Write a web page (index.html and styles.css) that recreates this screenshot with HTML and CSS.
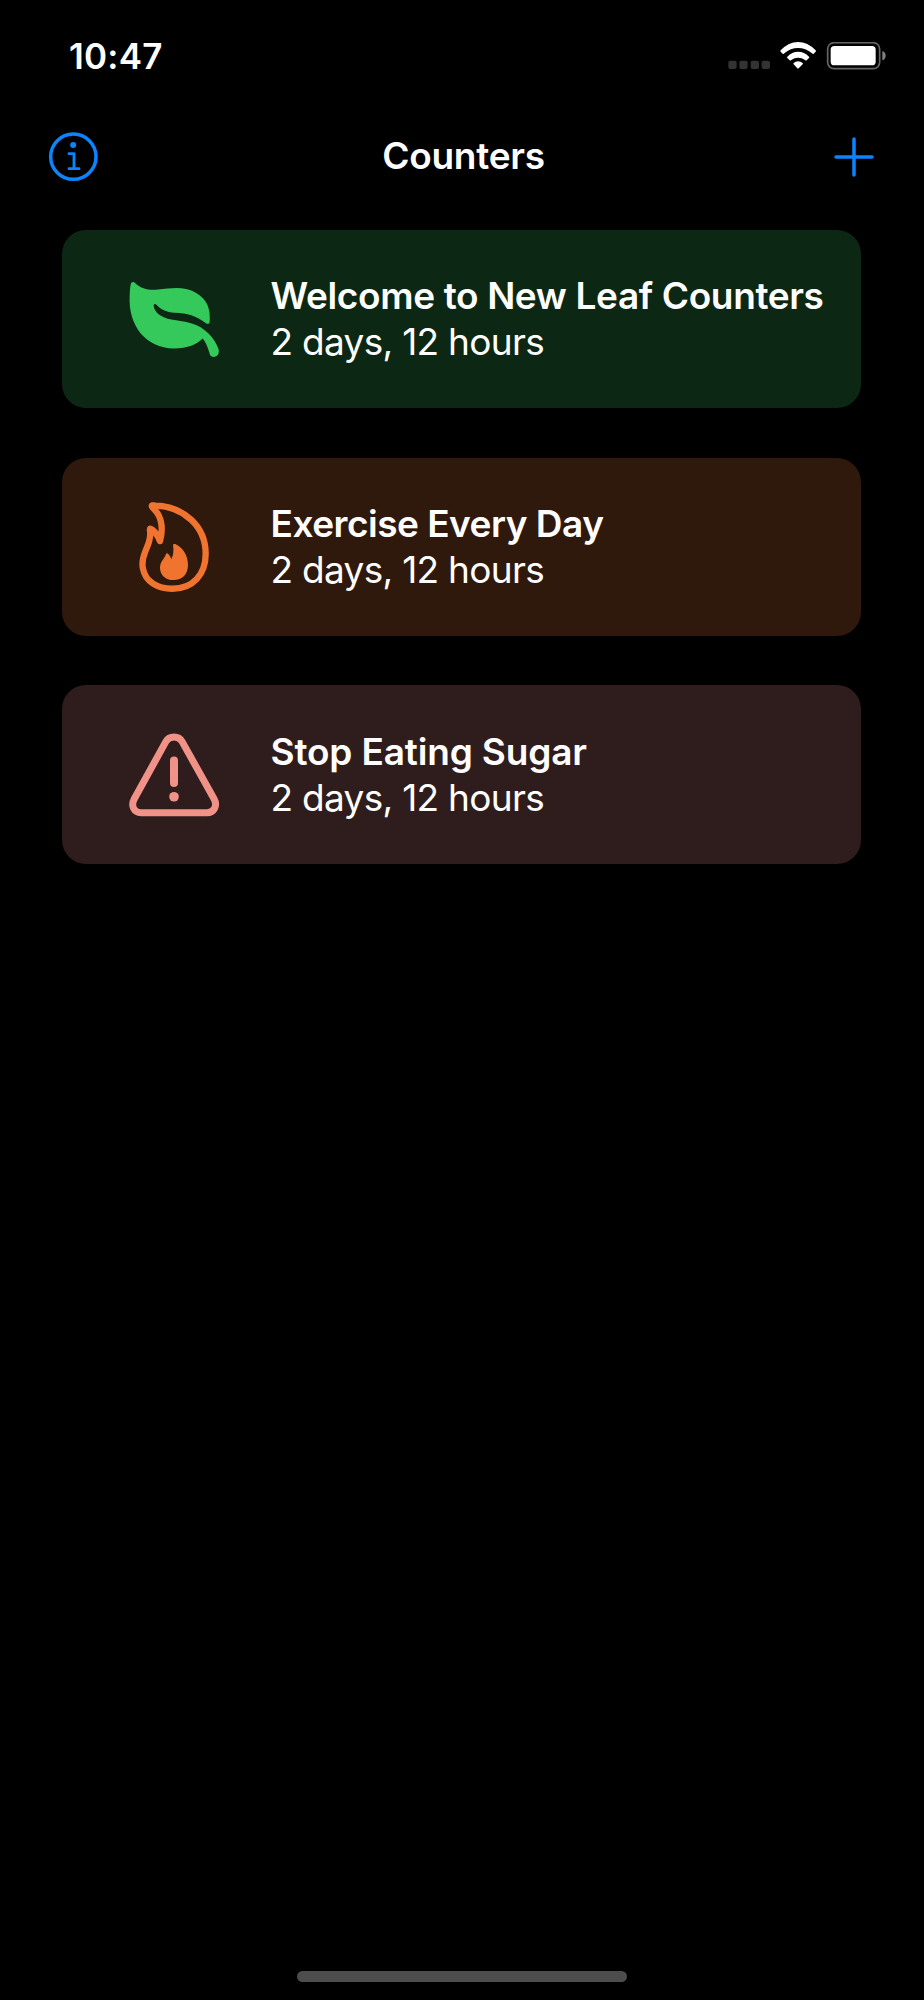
FILE: index.html
```html
<!DOCTYPE html>
<html lang="en">
<head>
    <meta charset="UTF-8">
    <meta name="viewport" content="width=device-width, initial-scale=1.0">
    <title>Counters</title>
    <link rel="stylesheet" href="styles.css">
</head>
<body>
    <div class="screen">
        <div class="status-bar">
            <span class="time">10:47</span>
            <svg class="status-icons" viewBox="0 0 480 90">
                <g fill="#333">
                    <rect x="1" y="56" width="25" height="25" rx="6"/>
                    <rect x="34" y="56" width="25" height="25" rx="6"/>
                    <rect x="68" y="56" width="25" height="25" rx="6"/>
                    <rect x="101" y="56" width="25" height="25" rx="6"/>
                </g>
                <g fill="#fff">
                    <path d="M158 25Q182 0 210 0Q239 0 263 25Q265 27 263 29L257 35Q255 37 252 34Q233 18 210 18Q188 18 169 34Q166 37 164 35L158 29Q156 27 158 25Z"/>
                    <path d="M178 44Q192 29 210 29Q229 29 243 44Q245 46 243 48L236 55Q234 57 231 54Q222 47 210 47Q199 47 190 54Q187 57 185 55L178 48Q176 46 178 44Z"/>
                    <path d="M197 63Q203 58 210 58Q218 58 224 63Q226 65 224 67L212 79Q210 81 208 79L197 67Q195 65 197 63Z"/>
                </g>
                <rect x="299" y="2" width="156" height="78" rx="19" fill="none" stroke="#666" stroke-width="5"/>
                <rect x="308" y="12" width="135" height="58" rx="11" fill="#fff"/>
                <path d="M463 27Q473 30 473 41Q473 51 463 55Z" fill="#808080"/>
            </svg>
        </div>
        <div class="nav-bar">
            <svg class="nav-icon" viewBox="0 0 150 150">
                <circle cx="76" cy="74" r="68" stroke-width="10.5"/>
                <circle cx="75.500" cy="39" r="9" class="dot"/>
                <path d="M63 65H78V110M63 110H93" stroke-width="8.500"/>
            </svg>
            <h1>Counters</h1>
            <svg class="nav-icon" viewBox="0 0 150 150">
                <path d="M75 21V129M21 75H129" stroke-width="10.5"/>
            </svg>
        </div>
        <div class="counters">
            <div class="counter leaf">
                <svg class="counter-icon" viewBox="0 -2.400 420 360">
                    <path fill="currentColor" d="M93 70Q99 63 106 70C125 88 145 91 174 89C218 84 253 79 286 98C323 119 332 148 329 187Q327 195 319 191C287 167 263 161 224 159C198 156 186 151 171 136Q163 129 161 137C162 157 184 174 214 179C252 185 286 188 314 211C333 225 351 250 356 270C359 288 346 293 337 291Q330 289 328 278C322 260 318 248 308 236C291 253 263 266 222 266C137 265 84 197 89 107Q90 79 93 70Z"/>
                </svg>
                <div class="counter-text">
                    <div class="name name-welcome">Welcome to New Leaf Counters</div>
                    <div class="elapsed">2 days, 12 hours</div>
                </div>
            </div>
            <div class="counter flame">
                <svg class="counter-icon" viewBox="0 20.700 420 360">
                    <path fill="none" stroke="currentColor" stroke-width="19" stroke-linejoin="round" d="M165 76C151 74 154 80 163 88C184 108 191 144 180 183C175 170 168 158 157 149C149 143 149 145 150 152C154 177 144 194 136 214C128 234 125 250 129 266C136 305 173 326 217 326C280 326 317 282 317 221C317 139 253 80 165 76Z"/>
                    <path fill="currentColor" d="M219 194Q220 190 226 192C251 204 264 229 264 255C264 283 247 300 221 300C195 300 180 284 180 262C181 242 196 234 198 221Q201 218 205 222Q212 229 214 237Q223 221 219 194Z"/>
                </svg>
                <div class="counter-text">
                    <div class="name name-exercise">Exercise Every Day</div>
                    <div class="elapsed">2 days, 12 hours</div>
                </div>
            </div>
            <div class="counter warning">
                <svg class="counter-icon" viewBox="0 13.800 420 360">
                    <path fill="none" stroke="currentColor" stroke-width="21" d="M198 93C208 75 236 75 246 93L342 265C354 287 341 307 321 307H123C103 307 91 287 103 265Z"/>
                    <path fill="none" stroke="currentColor" stroke-width="24" stroke-linecap="round" d="M222 150V218"/>
                    <circle cx="222" cy="259" r="14.500" fill="currentColor"/>
                </svg>
                <div class="counter-text">
                    <div class="name name-sugar">Stop Eating Sugar</div>
                    <div class="elapsed">2 days, 12 hours</div>
                </div>
            </div>
        </div>
        <div class="home-indicator"></div>
    </div>
</body>
</html>
```

FILE: styles.css
```css
* {
    box-sizing: border-box;
}
body {
    margin: 0;
    background-color: #000;
    color: #fff;
    font-family: Inter, "Liberation Sans", sans-serif;
}
.screen {
    height: 2000px;
    display: flex;
    flex-direction: column;
    align-items: center;
    padding-bottom: 18px;
}
.status-bar {
    width: 100%;
    height: 112px;
    padding: 34px 36px 0 69px;
    display: flex;
    justify-content: space-between;
    align-items: flex-start;
}
.time {
    font-size: 35px;
    font-weight: 600;
    line-height: 44px;
    letter-spacing: 0.2px;
}
.status-icons {
    width: 160px;
    height: 30px;
    margin-top: 8px;
}
.nav-bar {
    width: 100%;
    height: 90px;
    padding: 0 45px 0 48px;
    display: flex;
    justify-content: space-between;
    align-items: center;
}
.nav-bar h1 {
    margin: 0 0 3px;
    font-size: 37px;
    font-weight: 600;
    letter-spacing: -0.25px;
}
.nav-icon {
    width: 50px;
    height: 50px;
    fill: none;
    stroke: #0a84ff;
    stroke-linecap: round;
    stroke-linejoin: round;
}
.nav-icon .dot {
    fill: #0a84ff;
    stroke: none;
}
.counters {
    width: 799px;
    margin-top: 28px;
    margin-right: 1px;
    display: flex;
    flex-direction: column;
    gap: 49.300px;
}
.counter {
    height: 178.400px;
    padding-left: 38px;
    border-radius: 24px;
    display: flex;
    align-items: center;
}
.counter-icon {
    width: 140px;
    height: 120px;
    flex-shrink: 0;
}
.counter-text {
    margin-left: 30.500px;
    font-size: 37px;
    line-height: 46px;
    white-space: nowrap;
}
.name {
    font-weight: 600;
}
.name-welcome {
    letter-spacing: -0.36px;
}
.name-exercise {
    letter-spacing: -0.5px;
}
.name-sugar {
    letter-spacing: -0.16px;
}
.elapsed {
    letter-spacing: -0.7px;
}
.leaf {
    background-color: #0c2814;
    color: #35c95b;
}
.flame {
    background-color: #2f180c;
    color: #f0742f;
}
.warning {
    background-color: #2f1d1d;
    color: #f09287;
}
.counter-text {
    color: #fff;
}
.home-indicator {
    width: 330px;
    height: 11px;
    margin-top: auto;
    border-radius: 6px;
    background-color: #4d4d4d;
}
```
